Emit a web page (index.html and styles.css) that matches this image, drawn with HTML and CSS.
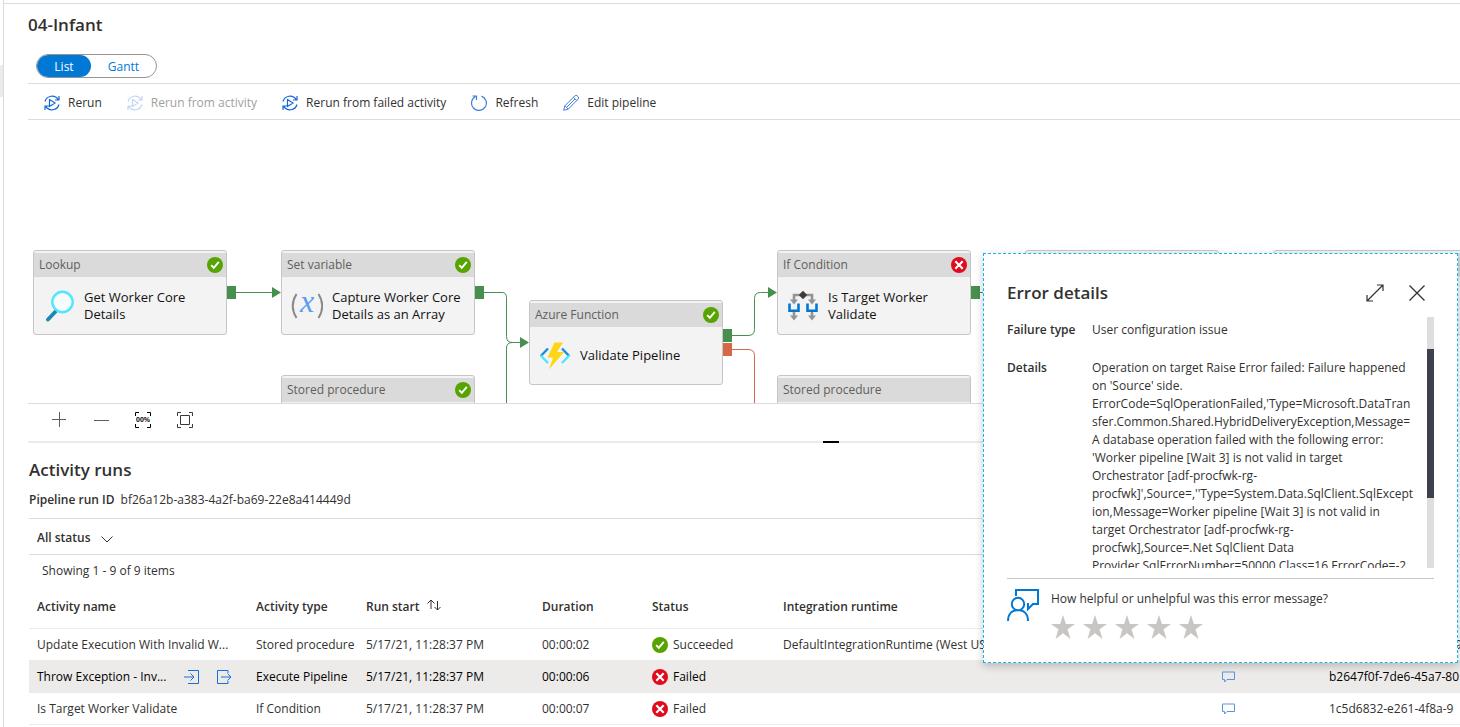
FILE: index.html
```html
<!DOCTYPE html>
<html lang="en">
<head>
<meta charset="UTF-8">
<meta name="viewport" content="width=device-width, initial-scale=1.0">
<title>04-Infant - Pipeline run</title>
<link rel="stylesheet" href="styles.css">
</head>
<body>

<svg class="defs" aria-hidden="true">
  <symbol id="i-rerun" viewBox="0 0 16 16">
    <path d="M1 6.500A7.300 7.300 0 0 1 14.200 4.600M15 9.500A7.300 7.300 0 0 1 1.800 11.400M15 1v4h-4M1 15v-4h4M5.500 4.500v7l5.500-3.500z" fill="none" stroke="currentColor" stroke-width="1.200"/>
  </symbol>
  <symbol id="i-ok" viewBox="0 0 16 16">
    <circle cx="8" cy="8" r="8" fill="#57a300"/>
    <path d="M4.200 8.200l2.600 2.600 5-6" fill="none" stroke="#fff" stroke-width="1.900"/>
  </symbol>
  <symbol id="i-fail" viewBox="0 0 16 16">
    <circle cx="8" cy="8" r="8" fill="#e00b1c"/>
    <path d="M4.300 4.300l7.400 7.400M11.700 4.300l-7.400 7.400" stroke="#fff" stroke-width="2.200"/>
  </symbol>
  <symbol id="i-comment" viewBox="0 0 13 12">
    <path d="M.5 1h12v7.500H5l-2.500 2.500V8.500H.5z" fill="none" stroke="#5b93de"/>
  </symbol>
  <symbol id="i-star" viewBox="0 0 24 24">
    <path d="M12 0l2.900 9H24l-7.400 5.300L19.500 24 12 18.200 4.500 24l2.900-9.700L0 9h9.100z" fill="#c8c6c4"/>
  </symbol>
</svg>

<div class="rail"><div class="rail-mark"></div></div>

<main class="main">
  <h1 class="title">04-Infant</h1>

  <div class="switch">
    <button class="switch-btn on">List</button>
    <button class="switch-btn">Gantt</button>
  </div>

  <div class="toolbar">
    <button class="tool"><svg class="ico16"><use href="#i-rerun"/></svg>Rerun</button>
    <button class="tool" disabled><svg class="ico16"><use href="#i-rerun"/></svg>Rerun from activity</button>
    <button class="tool"><svg class="ico16"><use href="#i-rerun"/></svg>Rerun from failed activity</button>
    <button class="tool">
      <svg class="ico16 light" viewBox="0 0 16 16"><path d="M10.500 1.100A7.400 7.400 0 1 1 4.500 1.500M1.500 1h4v4" fill="none" stroke="currentColor" stroke-width="1.200"/></svg>Refresh
    </button>
    <button class="tool">
      <svg class="ico16 light" viewBox="0 0 16 16"><path d="M.7 15.300l1.200-4.500L11.700 1a1.900 1.900 0 0 1 2.700 0l.6.6a1.900 1.900 0 0 1 0 2.700L5.200 14.100zM1.900 10.800l3.300 3.300M10.500 2.300l3.300 3.300M3.800 12.200l8.200-8.200" fill="none" stroke="currentColor"/></svg>Edit pipeline
    </button>
  </div>

  <section class="canvas">
    <svg class="wires" viewBox="0 0 1432 283">
      <g fill="none" stroke="#478f4f">
        <path d="M208 172.500h36"/>
        <path d="M456 172.500h18q4.500 0 4.500 5v39q0 6 6 6h8"/>
        <path d="M478.500 283v-55q0-5.500 6-5.500h8"/>
        <path d="M704 215.500h16q6.500 0 6.500-6v-31q0-6 6-6h8"/>
        <path d="M952 172.500h45"/>
      </g>
      <path d="M704 229.500h16q6.500 0 6.500 6V283" fill="none" stroke="#d66848"/>
      <g fill="#478f4f">
        <path d="M244 167l9 5.500-9 5.500zM492 217l9 5.500-9 5.500zM740 167l9 5.500-9 5.500z"/>
        <path d="M199 166h9v13h-9zM447 166h9v13h-9zM695 209h9v13h-9zM943 166h9v13h-9z"/>
      </g>
      <path d="M695 223h9v13h-9z" fill="#d66848"/>
    </svg>

    <article class="node n-lookup">
      <header class="node-head">Lookup<svg class="ico16"><use href="#i-ok"/></svg></header>
      <div class="node-body">
        <svg class="ico32" viewBox="0 0 32 32">
          <path d="M5 29.500l8.500-9" stroke="#1b87b5" stroke-width="3.800" stroke-linecap="round"/>
          <circle cx="19.500" cy="12" r="10.200" fill="#f7fdff" stroke="#50e6ff" stroke-width="2.400"/>
        </svg>
        <span>Get Worker Core<br>Details</span>
      </div>
    </article>

    <article class="node n-setvar">
      <header class="node-head">Set variable<svg class="ico16"><use href="#i-ok"/></svg></header>
      <div class="node-body">
        <svg class="ico32" viewBox="0 0 32 32">
          <path d="M5.500 4Q-2 16 5.500 28M27.500 4q7.500 12 0 24" fill="none" stroke="#8a8a8a" stroke-width="2"/>
          <text class="var-x" x="16" y="22" text-anchor="middle">x</text>
        </svg>
        <span>Capture Worker Core<br>Details as an Array</span>
      </div>
    </article>

    <article class="node n-func">
      <header class="node-head">Azure Function<svg class="ico16"><use href="#i-ok"/></svg></header>
      <div class="node-body">
        <svg class="ico32" viewBox="0 0 32 32">
          <path d="M9 8.500l-7.200 7.500M23 8.500l7.200 7.500" stroke="#1b8ae0" stroke-width="2.400"/>
          <path d="M1.800 15.500L9 23M30.200 15.500L23 23" stroke="#50e6ff" stroke-width="2.400"/>
          <path d="M15.500 2.500H24l-6 9.500h7L10 29.500l4-12H8.500z" fill="#ffd616"/>
        </svg>
        <span>Validate Pipeline</span>
      </div>
    </article>

    <article class="node n-if">
      <header class="node-head">If Condition<svg class="ico16"><use href="#i-fail"/></svg></header>
      <div class="node-body">
        <svg class="ico32" viewBox="0 0 32 32">
          <path d="M7 11V5h18v6M7 21v6M25 21v6" fill="none" stroke="#949494" stroke-width="2.600"/>
          <path d="M3 9.500h8l-4 5zM21 9.500h8l-4 5zM3 25.500h8l-4 5zM21 25.500h8l-4 5z" fill="#949494"/>
          <path d="M16 .8l4.200 4.200L16 9.200 11.800 5z" fill="#3b3b3b"/>
          <path d="M2.500 13.500v7.200h9v-7.200M20.500 13.500v7.200h9v-7.200" fill="none" stroke="#0078d4" stroke-width="2.600"/>
        </svg>
        <span>Is Target Worker<br>Validate</span>
      </div>
    </article>

    <article class="node n-proc1">
      <header class="node-head">Stored procedure<svg class="ico16"><use href="#i-ok"/></svg></header>
      <div class="node-body"></div>
    </article>
    <article class="node n-proc2">
      <header class="node-head">Stored procedure</header>
      <div class="node-body"></div>
    </article>
    <article class="node n-next1"><header class="node-head"></header><div class="node-body"></div></article>
    <article class="node n-next2"><header class="node-head"></header><div class="node-body"></div></article>
  </section>

  <div class="zoombar">
    <button aria-label="Zoom in"><svg class="ico16" viewBox="0 0 16 16"><path d="M1 7.500h14M8.500 0v15" stroke="#605e5c"/></svg></button>
    <button aria-label="Zoom out"><svg class="ico16" viewBox="0 0 16 16"><path d="M1 8.500h15" stroke="#605e5c"/></svg></button>
    <button aria-label="Zoom to 100%">
      <svg class="ico16" viewBox="0 0 16 16"><path d="M4 .5H.5V4M12 .5h3.500V4M4 15.500H.5V12M12 15.500h3.500V12" fill="none" stroke="#000"/><text class="pct" x="8" y="10" text-anchor="middle">00%</text></svg>
    </button>
    <button aria-label="Zoom to fit">
      <svg class="ico16" viewBox="0 0 16 16"><path d="M4 .5H.5V4M12 .5h3.500V4M4 15.500H.5V12M12 15.500h3.500V12M3.500 3.500h9v9h-9z" fill="none" stroke="#3b3a39"/></svg>
    </button>
  </div>
  <div class="splitter"><div class="splitter-grip"></div></div>

  <section class="runs">
    <h2 class="runs-title">Activity runs</h2>
    <p class="run-id"><b>Pipeline run ID</b> bf26a12b-a383-4a2f-ba69-22e8a414449d</p>

    <div class="filter">
      <div class="status-pick">
        <select aria-label="Status filter"><option>All status</option></select>
        <svg class="chev" viewBox="0 0 12 7"><path d="M.5.5L6 6 11.500.5" fill="none" stroke="#323130"/></svg>
      </div>
    </div>
    <p class="count">Showing 1 - 9 of 9 items</p>

    <table class="grid">
      <colgroup>
        <col class="c-name"><col class="c-type"><col class="c-start"><col class="c-dur">
        <col class="c-status"><col class="c-ir"><col class="c-props"><col class="c-id">
      </colgroup>
      <thead>
        <tr>
          <th>Activity name</th>
          <th>Activity type</th>
          <th>Run start
            <svg class="sort" viewBox="0 0 14 12"><path d="M4 10V1M.5 4.500L4 1l3.500 3.500M10.500 2v9M7.500 8l3 3 3-3" fill="none" stroke="#323130"/></svg>
          </th>
          <th>Duration</th>
          <th>Status</th>
          <th>Integration runtime</th>
          <th></th>
          <th></th>
        </tr>
      </thead>
      <tbody>
        <tr>
          <td>Update Execution With Invalid W...</td>
          <td>Stored procedure</td>
          <td>5/17/21, 11:28:37 PM</td>
          <td>00:00:02</td>
          <td><span class="state"><svg class="ico16"><use href="#i-ok"/></svg>Succeeded</span></td>
          <td>DefaultIntegrationRuntime (West US)</td>
          <td></td>
          <td>c0d52b1e-4f3a-4b7d-99</td>
        </tr>
        <tr class="hover">
          <td>
            <div class="name-cell">
              <span>Throw Exception - Inv...</span>
              <button aria-label="Input"><svg class="ico16" viewBox="0 0 16 16"><path d="M4 1.500h10.500v13H4M0 8h10M6.500 4.500L10 8l-3.500 3.500" fill="none" stroke="#1a6ed8"/></svg></button>
              <button aria-label="Output"><svg class="ico16" viewBox="0 0 16 16"><path d="M12 4V1.500H1.500v13H12V12M5 8h10M11.500 4.500L15 8l-3.500 3.500" fill="none" stroke="#1a6ed8"/></svg></button>
            </div>
          </td>
          <td>Execute Pipeline</td>
          <td>5/17/21, 11:28:37 PM</td>
          <td>00:00:06</td>
          <td><span class="state"><svg class="ico16"><use href="#i-fail"/></svg>Failed</span></td>
          <td></td>
          <td><button class="note" aria-label="Error"><svg class="ico-note"><use href="#i-comment"/></svg></button></td>
          <td>b2647f0f-7de6-45a7-80</td>
        </tr>
        <tr>
          <td>Is Target Worker Validate</td>
          <td>If Condition</td>
          <td>5/17/21, 11:28:37 PM</td>
          <td>00:00:07</td>
          <td><span class="state"><svg class="ico16"><use href="#i-fail"/></svg>Failed</span></td>
          <td></td>
          <td><button class="note" aria-label="Error"><svg class="ico-note"><use href="#i-comment"/></svg></button></td>
          <td>1c5d6832-e261-4f8a-9</td>
        </tr>
      </tbody>
    </table>
  </section>
</main>

<aside class="popup" role="dialog" aria-labelledby="popup-title">
  <header class="popup-head">
    <h2 id="popup-title">Error details</h2>
    <button aria-label="Expand"><svg class="ico18" viewBox="0 0 18 18"><path d="M1 17L17 1M11 1h6v6M1 11v6h6" fill="none" stroke="#323130" stroke-width="1.200"/></svg></button>
    <button aria-label="Close"><svg class="ico18" viewBox="0 0 18 18"><path d="M1.500 1.500l15 15M16.500 1.500l-15 15" fill="none" stroke="#323130" stroke-width="1.300"/></svg></button>
  </header>

  <div class="popup-scroll">
    <dl class="facts">
      <dt>Failure type</dt>
      <dd>User configuration issue</dd>
      <dt>Details</dt>
      <dd>Operation on target Raise Error failed: Failure happened<br>
        on 'Source' side.<br>
        ErrorCode=SqlOperationFailed,'Type=Microsoft.DataTran<br>
        sfer.Common.Shared.HybridDeliveryException,Message=<br>
        A database operation failed with the following error:<br>
        'Worker pipeline [Wait 3] is not valid in target<br>
        Orchestrator [adf-procfwk-rg-<br>
        procfwk]',Source=,''Type=System.Data.SqlClient.SqlExcept<br>
        ion,Message=Worker pipeline [Wait 3] is not valid in<br>
        target Orchestrator [adf-procfwk-rg-<br>
        procfwk],Source=.Net SqlClient Data<br>
        Provider,SqlErrorNumber=50000,Class=16,ErrorCode=-2</dd>
    </dl>
    <div class="track"><div class="thumb"></div></div>
  </div>

  <footer class="feedback">
    <svg class="ico32" viewBox="0 0 32 32">
      <path d="M9 7V1h22v14h-5l-5 5v-5h-1M1 32c0-7 4-11 10-11s10 4 10 11" fill="none" stroke="#0078d4" stroke-width="2"/>
      <circle cx="11" cy="15" r="6.200" fill="#fff" stroke="#0078d4" stroke-width="2"/>
    </svg>
    <div>
      <p>How helpful or unhelpful was this error message?</p>
      <div class="stars">
        <button aria-label="1 star"><svg class="ico24"><use href="#i-star"/></svg></button>
        <button aria-label="2 stars"><svg class="ico24"><use href="#i-star"/></svg></button>
        <button aria-label="3 stars"><svg class="ico24"><use href="#i-star"/></svg></button>
        <button aria-label="4 stars"><svg class="ico24"><use href="#i-star"/></svg></button>
        <button aria-label="5 stars"><svg class="ico24"><use href="#i-star"/></svg></button>
      </div>
    </div>
  </footer>
</aside>

</body>
</html>
```

FILE: styles.css
```css
*, *::before, *::after { box-sizing: border-box; margin: 0; padding: 0; }
body {
  display: flex;
  min-height: 100vh;
  overflow: hidden;
  position: relative;
  background: #fff;
  color: #323130;
  font-family: 'Open Sans', 'Noto Sans', sans-serif;
  font-size: 12px;
  line-height: 18px;
}
button {
  border: none;
  background: none;
  color: inherit;
  font: inherit;
  cursor: pointer;
}
svg { display: block; flex-shrink: 0; }
.defs { position: absolute; width: 0; height: 0; }
.ico16 { width: 16px; height: 16px; }
.ico18 { width: 18px; height: 18px; }
.ico24 { width: 24px; height: 24px; }
.ico32 { width: 32px; height: 32px; }

.rail { width: 4px; flex-shrink: 0; padding-top: 65px; border-right: 1px solid #dcdcdc; }
.rail-mark { height: 32px; background: #edebe9; }

.main {
  flex: 1;
  min-width: 0;
  margin-top: 3px;
  padding-left: 24px;
  border-top: 1px solid #dcdcdc;
  overflow: hidden;
}
.title, .runs-title, .popup-head h2 { font-size: 17px; font-weight: 600; line-height: 24px; }
.title { padding-top: 9px; }

/* list / gantt */
.switch {
  display: inline-flex;
  margin: 17px 0 5px 8px;
  height: 24px;
  border: 1px solid #979593;
  border-radius: 12px;
  overflow: hidden;
  vertical-align: top;
}
.switch-btn { width: 65px; padding-top: 1px; color: #0078d4; }
.switch-btn.on { width: 54px; background: #0078d4; color: #fff; border-radius: 12px; }

.toolbar {
  display: flex;
  align-items: center;
  gap: 25px;
  height: 37px;
  padding: 2px 0 0 16px;
  border-top: 1px solid #dcdcdc;
  border-bottom: 1px solid #dcdcdc;
}
.tool { display: flex; align-items: center; gap: 8px; white-space: nowrap; }
.tool .ico16 { color: #1565d8; }
.tool .light { color: #3f7fdc; }
.tool:disabled { color: #a19f9d; cursor: default; }
.tool:disabled .ico16 { color: #c3d6f5; }

/* pipeline graph */
.canvas { position: relative; height: 283px; overflow: hidden; }
.wires { position: absolute; top: 0; left: 0; width: 1432px; height: 283px; }
.node {
  position: absolute;
  width: 194px;
  height: 85px;
  display: flex;
  flex-direction: column;
  padding-top: 2px;
  background: #f3f3f3;
  border: 1px solid #c6c6c6;
  border-radius: 3px;
}
.n-lookup { left: 5px; top: 130px; }
.n-setvar { left: 253px; top: 130px; }
.n-func { left: 501px; top: 180px; }
.n-if { left: 749px; top: 130px; }
.n-proc1 { left: 253px; top: 255px; }
.n-proc2 { left: 749px; top: 255px; }
.n-next1 { left: 997px; top: 130px; }
.n-next2 { left: 1245px; top: 130px; }
.node-head {
  display: flex;
  align-items: center;
  justify-content: space-between;
  height: 24px;
  padding: 0 3px 0 5px;
  background: #dadada;
  color: #605e5c;
}
.node-body {
  flex: 1;
  display: flex;
  align-items: center;
  gap: 9px;
  padding-left: 9px;
  color: #111;
  font-size: 13px;
  line-height: 17px;
  white-space: nowrap;
}
.var-x { font: italic 32px 'Liberation Serif', serif; fill: #5a9cf0; }

.zoombar {
  display: flex;
  align-items: center;
  gap: 26px;
  height: 38px;
  padding: 0 0 6px 23px;
  border-top: 1px solid #dcdcdc;
}
.pct { font: bold 7px 'Liberation Sans', sans-serif; fill: #000; }
.splitter { height: 2px; background: #edebe9; }
.splitter-grip { width: 16px; height: 2px; margin-left: 795px; background: #000; }

/* activity runs */
.runs { padding-left: 1px; }
.runs-title { padding-top: 15px; }
.run-id { padding: 9px 0; }
.run-id b { margin-right: 3px; font-weight: 600; }
.filter {
  display: flex;
  align-items: center;
  height: 37px;
  padding: 2px 0 0 8px;
  border-top: 1px solid #dcdcdc;
  border-bottom: 1px solid #dcdcdc;
}
.status-pick { position: relative; }
.status-pick select {
  appearance: none;
  border: none;
  background: none;
  width: 80px;
  color: inherit;
  font: inherit;
  font-weight: 600;
}
.chev { position: absolute; right: 4px; top: 7px; width: 12px; height: 7px; pointer-events: none; }
.count { padding: 7px 0 0 13px; }

.grid { width: 1560px; margin-top: 5px; table-layout: fixed; border-collapse: collapse; }
.c-name { width: 219px; }
.c-type { width: 110px; }
.c-start { width: 176px; }
.c-dur { width: 110px; }
.c-status { width: 131px; }
.c-ir { width: 439px; }
.c-props { width: 107px; }
.grid th, .grid td {
  padding: 2px 0 0 8px;
  text-align: left;
  vertical-align: middle;
  white-space: nowrap;
  border-bottom: 1px solid #edebe9;
}
.grid th { height: 43px; font-weight: 600; }
.grid td { height: 32px; }
.hover { background: #edebe9; color: #000; }
.sort { display: inline-block; width: 14px; height: 12px; margin-left: 4px; }
.state { display: flex; align-items: center; gap: 5px; }
.name-cell { display: flex; align-items: center; gap: 16px; }
.name-cell span { width: 131px; }
.note { display: flex; }
.ico-note { width: 13px; height: 12px; }

/* error popup */
.popup {
  position: absolute;
  top: 253px;
  right: 2px;
  width: 475px;
  height: 410px;
  padding: 23px 23px 0;
  background: #fff;
  border: 1px dashed #12b5ea;
  box-shadow: 0 3px 8px rgba(0, 0, 0, 0.22);
}
.popup-head { display: flex; align-items: center; gap: 24px; height: 32px; padding-right: 8px; }
.popup-head h2 { flex: 1; }
.popup-scroll { display: flex; height: 251px; margin-top: 8px; }
.facts {
  flex: 1;
  display: grid;
  grid-template-columns: 85px 1fr;
  row-gap: 20px;
  align-content: start;
  padding-top: 4px;
  overflow: hidden;
  white-space: nowrap;
}
.facts dt { font-weight: 600; }
.track { width: 7px; padding-top: 32px; background: #dedede; }
.thumb { height: 149px; background: #3c414d; }
.feedback {
  display: flex;
  gap: 12px;
  margin-top: 10px;
  padding-top: 10px;
  border-top: 1px solid #c8c6c4;
}
.feedback p { padding-top: 1px; }
.stars { display: flex; gap: 8px; margin-top: 7px; }
```
